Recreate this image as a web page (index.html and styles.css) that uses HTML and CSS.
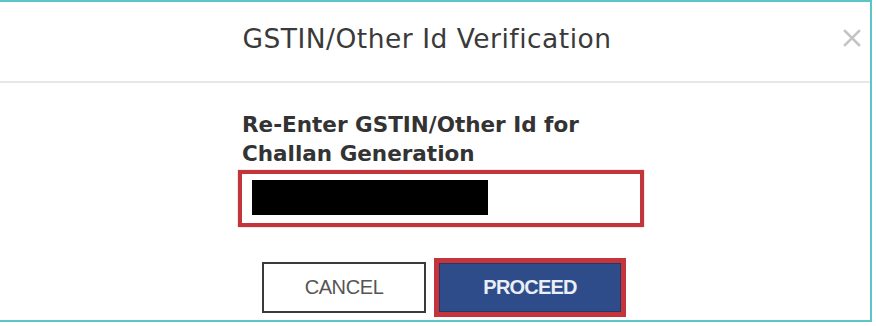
FILE: index.html
```html
<!DOCTYPE html>
<html lang="en">
<head>
<meta charset="utf-8">
<title>GSTIN/Other Id Verification</title>
<link rel="stylesheet" href="styles.css">
</head>
<body>
<div class="modal">
  <div class="modal-header">
    <h4 class="modal-title">GSTIN/Other Id Verification</h4>
    <button class="close" type="button" aria-label="Close">
      <svg width="18" height="18" viewBox="0 0 18 18"><path d="M2 2 L16 16 M16 2 L2 16" stroke="#c4c4c4" stroke-width="2.6" stroke-linecap="square"/></svg>
    </button>
  </div>
  <div class="modal-body">
    <label class="field-label">Re-Enter GSTIN/Other Id for<br>Challan Generation</label>
    <div class="field"><span class="masked"></span></div>
    <div class="actions">
      <button class="btn btn-cancel" type="button">CANCEL</button>
      <button class="btn btn-proceed" type="button"><span>PROCEED</span></button>
    </div>
  </div>
</div>
</body>
</html>
```
FILE: styles.css
```css
html, body {
  margin: 0;
  padding: 0;
  background: #ffffff;
}
.modal {
  width: 870px;
  height: 318px;
  border-top: 2px solid #5cc6c7;
  border-right: 2px solid #5cc6c7;
  border-bottom: 2px solid #5cc6c7;
  background: #ffffff;
  overflow: hidden;
}
.modal-header {
  height: 79px;
  border-bottom: 2px solid #e7e7e7;
  display: flex;
  align-items: center;
  padding: 0 9px 0 11px;
}
.modal-title {
  flex: 1;
  margin: 0;
  text-align: center;
  font-family: "DejaVu Sans", sans-serif;
  font-weight: normal;
  font-size: 26.5px;
  letter-spacing: 0.5px;
  color: #3a3a3a;
  padding-bottom: 6px;
}
.close {
  width: 18px;
  height: 18px;
  padding: 0;
  margin: 0 0 8px 0;
  border: 0;
  background: none;
  display: flex;
}
.modal-body {
  padding: 27px 0 0 238px;
  width: 406px;
}
.field-label {
  display: block;
  font-family: "DejaVu Sans", sans-serif;
  font-weight: bold;
  font-size: 21.5px;
  line-height: 29px;
  color: #333333;
  padding-left: 4px;
}
.field {
  margin-top: 2px;
  height: 37px;
  border: 4px solid #c2353b;
  box-shadow: 0 0 1px #d46a6e;
  padding: 6px 10px;
  box-sizing: content-box;
  width: 378px;
}
.masked {
  display: block;
  width: 236px;
  height: 35px;
  background: #000000;
}
.actions {
  display: flex;
  align-items: center;
  gap: 8px;
  margin-top: 31px;
  padding-left: 24px;
}
.btn {
  font-family: "Liberation Sans", Arial, sans-serif;
  font-size: 20px;
  letter-spacing: -0.4px;
  cursor: pointer;
  padding: 0;
  margin: 0;
}
.btn-cancel {
  width: 164px;
  height: 51px;
  border: 2px solid #3a3a3a;
  background: #ffffff;
  color: #555555;
}
.btn-proceed {
  width: 192px;
  height: 59px;
  border: 5px solid #c5333b;
  background: #2e4c8a;
  color: #e9eef7;
  font-weight: bold;
  letter-spacing: -0.8px;
  box-shadow: inset 0 0 0 1px #23386a;
}
```
